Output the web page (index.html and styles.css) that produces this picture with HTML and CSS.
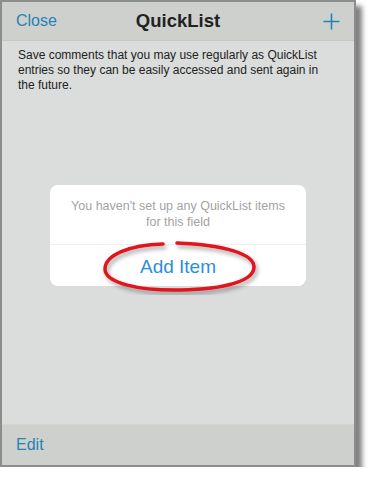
FILE: index.html
```html
<!DOCTYPE html>
<html lang="en">
<head>
<meta charset="UTF-8">
<meta name="viewport" content="width=device-width, initial-scale=1.0">
<title>QuickList</title>
<link rel="stylesheet" href="styles.css">
</head>
<body>
<div class="frame">
  <div class="header">
    <span class="link">Close</span>
    <span class="title">QuickList</span>
    <svg class="plus" width="17" height="17" viewBox="0 0 17 17">
      <path d="M8.5 0.5V16.5M0.5 8.5H16.5" stroke="#2782b5" stroke-width="1.6" fill="none"/>
    </svg>
  </div>
  <div class="content">
    <p class="desc">Save comments that you may use regularly as QuickList entries so they can be easily accessed and sent again in the future.</p>
    <div class="middle">
      <div class="card">
        <div class="card-msg">You haven't set up any QuickList items<br>for this field</div>
        <div class="card-action">
          <span class="add">Add Item</span>
          <svg class="circle" width="170" height="56" viewBox="0 0 170 56">
            <defs>
              <filter id="sh" x="-10%" y="-20%" width="130%" height="160%">
                <feDropShadow dx="2" dy="3" stdDeviation="2" flood-color="#000" flood-opacity="0.35"/>
              </filter>
            </defs>
            <path filter="url(#sh)" d="M64 5 C30 6 6 16 6 30 C6 44 40 52 82 51 C126 50 155 42 155 28 C155 15 126 6 78 4" stroke="#e0141b" stroke-width="3.5" fill="none" stroke-linecap="round"/>
          </svg>
        </div>
      </div>
    </div>
  </div>
  <div class="footer">
    <span class="link">Edit</span>
  </div>
</div>
</body>
</html>
```

FILE: styles.css
```css
body {
  margin: 0;
  background-color: #ffffff;
  font-family: "Liberation Sans", Arial, sans-serif;
}

.frame {
  width: 352px;
  height: 463px;
  border: 2px solid #8c8e8c;
  background-color: #dadddb;
  box-shadow: 6px 6px 5px rgba(0, 0, 0, 0.5);
  display: flex;
  flex-direction: column;
}

.header {
  height: 38px;
  background-color: #cdd0cd;
  border-bottom: 1px solid #c4c7c4;
  display: grid;
  grid-template-columns: 1fr auto 1fr;
  align-items: center;
  padding: 0 14px 0 14px;
}

.link {
  color: #2782b5;
  font-size: 16px;
}

.title {
  font-weight: bold;
  font-size: 18.5px;
  color: #222;
}

.plus {
  display: block;
  justify-self: end;
}

.content {
  flex: 1;
  display: flex;
  flex-direction: column;
}

.desc {
  margin: 0;
  padding: 7px 18px 0 16px;
  font-size: 12px;
  line-height: 15px;
  color: #222;
}

.middle {
  flex: 1;
  display: flex;
  align-items: center;
  justify-content: center;
  padding-bottom: 46px;
}

.card {
  width: 256px;
  background-color: #ffffff;
  border-radius: 8px;
}

.card-msg {
  height: 60px;
  box-sizing: border-box;
  padding-top: 13px;
  text-align: center;
  color: #a3a3a3;
  font-size: 12.5px;
  line-height: 16px;
  border-bottom: 1px solid #f0f0f0;
}

.card-action {
  height: 41px;
  position: relative;
  display: flex;
  align-items: center;
  justify-content: center;
}

.add {
  color: #2b8fd8;
  font-size: 19px;
  padding-top: 2px;
}

.circle {
  position: absolute;
  left: 49px;
  top: -6px;
}

.footer {
  height: 40px;
  background-color: #cdd0cd;
  border-top: 1px solid #d2d5d2;
  display: flex;
  align-items: center;
  padding: 0 14px;
}
```
